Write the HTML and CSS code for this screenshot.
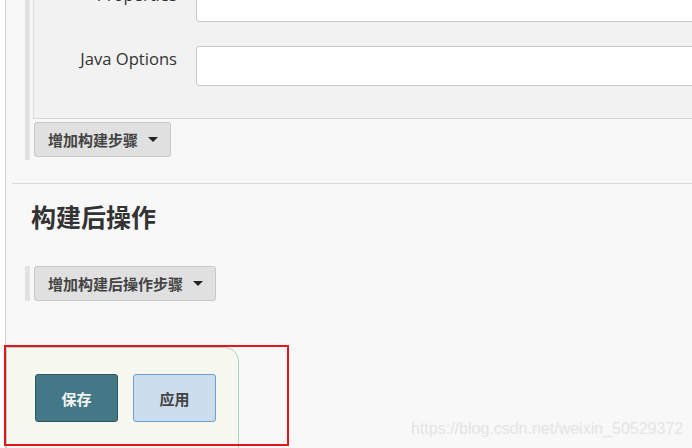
FILE: index.html
```html
<!DOCTYPE html>
<html lang="zh-CN">
<head>
<meta charset="utf-8">
<title>构建后操作</title>
<link rel="stylesheet" href="styles.css">
</head>
<body>
<div class="page">
  <div class="section builders">
    <div class="panel">
      <div class="row">
        <label class="label">Properties</label>
        <div class="input"></div>
      </div>
      <div class="row">
        <label class="label">Java Options</label>
        <div class="input"></div>
      </div>
    </div>
    <button class="add-btn">增加构建步骤 <span class="caret"></span></button>
  </div>

  <hr class="sep">

  <h2 class="heading">构建后操作</h2>

  <div class="section post">
    <button class="add-btn">增加构建后操作步骤 <span class="caret"></span></button>
  </div>

  <div class="bottom-bar">
    <button class="btn save">保存</button>
    <button class="btn apply">应用</button>
  </div>
</div>
<div class="highlight"></div>
<div class="watermark">https://blog.csdn.net/weixin_50529372</div>
</body>
</html>
```

FILE: styles.css
```css
html, body {
  margin: 0;
  padding: 0;
  width: 692px;
  height: 448px;
  overflow: hidden;
  background: #ffffff;
  font-family: "Open Sans", "Noto Sans CJK SC", sans-serif;
  color: #333;
  position: relative;
}

.page {
  margin-left: 5px;
  border-left: 1px solid #d0d0d0;
  background: #f8f8f8;
  height: 448px;
  overflow: hidden;
}

.section {
  margin-left: 19px;
  border-left: 5px solid #e2e2e2;
  padding-left: 3px;
}

.builders {
  margin-top: -18px;
  padding-bottom: 3px;
}

.panel {
  background: #f2f2f2;
  border-left: 1px solid #dcdcdc;
  border-bottom: 1px solid #d4d4d4;
  padding-bottom: 32px;
  display: flex;
  flex-direction: column;
  gap: 24px;
}

.row {
  display: flex;
  align-items: flex-start;
  gap: 19px;
}

.label {
  width: 143px;
  text-align: right;
  font-size: 16.6px;
  line-height: 22px;
  padding-top: 2px;
  color: #333;
}

.input {
  flex: 1;
  height: 38px;
  background: #fff;
  border: 1px solid #c9c9c9;
  border-radius: 3px;
  margin-right: -20px;
}

.add-btn {
  display: inline-flex;
  align-items: center;
  margin-top: 3px;
  margin-left: 1px;
  height: 35px;
  padding: 0 12px 0 13px;
  background: #e0e0e0;
  border: 1px solid #c8c8c8;
  border-radius: 3px;
  font-family: "Noto Sans CJK SC", sans-serif;
  font-size: 15px;
  font-weight: 700;
  color: #444;
  gap: 8px;
}

.caret {
  width: 0;
  height: 0;
  border-left: 5px solid transparent;
  border-right: 5px solid transparent;
  border-top: 5px solid #222;
  margin-left: 2px;
}

.sep {
  margin: 23px 0 0 6px;
  border: 0;
  border-top: 1px solid #dadada;
  height: 0;
}

.heading {
  margin: 16px 0 0 25px;
  font-family: "Noto Sans CJK SC", sans-serif;
  font-size: 25px;
  font-weight: 700;
  line-height: 32px;
  color: #333;
}

.post {
  margin-top: 34px;
}

.post .add-btn {
  margin-top: 0;
  vertical-align: top;
}

.bottom-bar {
  margin-top: 46px;
  width: 233px;
  height: 120px;
  background: #f6f8ef;
  border: 1px solid #a9d6be;
  border-top-right-radius: 14px;
  display: flex;
  gap: 15px;
  padding: 26px 0 0 28px;
  box-sizing: border-box;
}

.btn {
  width: 83px;
  height: 48px;
  border-radius: 3px;
  font-family: "Noto Sans CJK SC", sans-serif;
  font-size: 15px;
  font-weight: 700;
}

.save {
  background: #457886;
  border: 1px solid #2e5562;
  color: #f4f4f4;
}

.apply {
  background: #ccddee;
  border: 1px solid #6a9fd4;
  color: #444;
}

.highlight {
  position: absolute;
  left: 4px;
  top: 345px;
  width: 281px;
  height: 97px;
  border: 2px solid #e8141c;
}

.watermark {
  position: absolute;
  left: 411px;
  top: 419px;
  font-family: "Liberation Sans", Arial, sans-serif;
  font-size: 16px;
  line-height: 20px;
  color: #e4e4e4;
}
```
